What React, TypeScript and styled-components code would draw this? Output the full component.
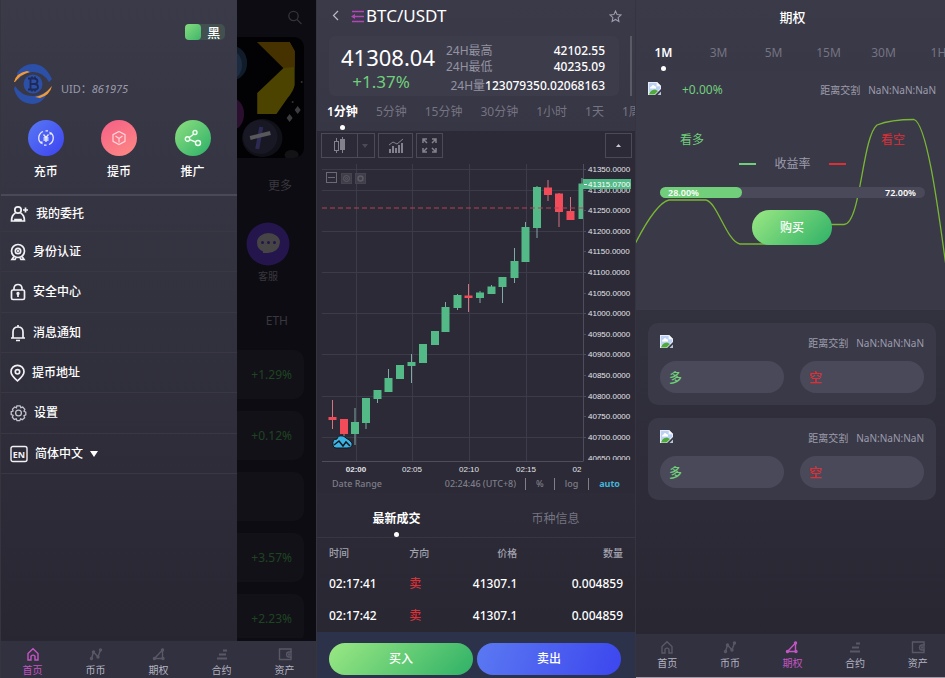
import React from "react";
import styled, { createGlobalStyle } from "styled-components";

const GlobalStyle = createGlobalStyle`
  * { box-sizing: border-box; }
  body {
    margin: 0;
    background: #33323e;
    color: #fff;
    font-family: "Noto Sans", "Noto Sans CJK SC", sans-serif;
    font-size: 12px;
    line-height: 16px;
  }
  button, input, select {
    font: inherit;
    color: inherit;
    margin: 0;
    padding: 0;
    border: 0;
    background: none;
  }
  ul { list-style: none; margin: 0; padding: 0; }
  a { color: inherit; text-decoration: none; }
  h1, h2, p { margin: 0; font: inherit; }
  svg { display: block; flex: none; }
`;

const GREEN = "#71cf7b";
const RED = "#dc3036";
const LIME = "linear-gradient(135deg, #9be883, #2fb167)";
const BLUE = "linear-gradient(110deg, #5b79f2, #3c46ee)";

const Screens = styled.main`
  display: grid;
  grid-template-columns: 316fr 319fr 310fr;
  min-height: 100vh;
`;

const Phone = styled.section`
  display: flex;
  flex-direction: column;
  min-width: 0;
  overflow: hidden;
  border-left: 1px solid #35343f;
  background: linear-gradient(#3b3a49, #2d2c38 70%, #262530);
`;

/* ---------- bottom navigation ---------- */

const NavBar = styled.nav<{ $tall?: boolean }>`
  display: grid;
  grid-template-columns: repeat(5, 1fr);
  margin-top: auto;
  margin-right: ${(p) => (p.$tall ? -4 : 0)}px;
  padding-top: 6px;
  height: ${(p) => (p.$tall ? 45 : 38)}px;
  background: #32313f;
  border-bottom: ${(p) => (p.$tall ? "2px solid #a598a4" : "0")};
`;

const NavLink = styled.a<{ $active: boolean }>`
  display: flex;
  flex-direction: column;
  align-items: center;
  gap: 2px;
  font-size: 10px;
  line-height: 14px;
  color: ${(p) => (p.$active ? "#c455c4" : "#b4b5c3")};
  svg { color: ${(p) => (p.$active ? "#c455c4" : "#595867")}; }
`;

const navIcons: Record<string, React.ReactNode> = {
  首页: <path d="M2 6.5 7 1.8 12 6.5V13H9V9.2Q7 7 5 9.2V13H2Z" />,
  币币: (
    <>
      <path d="M2.5 11.5 4.5 5 9 10 11.5 3" />
      <circle cx="2.5" cy="11.5" r="1" />
      <circle cx="4.5" cy="5" r="1" />
      <circle cx="9" cy="10" r="1" />
      <circle cx="11.5" cy="3" r="1" />
    </>
  ),
  期权: (
    <>
      <path d="M2.5 11.5 10.5 3V11.5Z" />
      <circle cx="2.5" cy="11.5" r="1" />
      <circle cx="10.5" cy="3" r="1" />
      <circle cx="11" cy="11.5" r="1" />
    </>
  ),
  合约: <path d="M8 3.5H12M4 7.5H11M2 11.5H12" strokeWidth="1.8" />,
  资产: (
    <>
      <path d="M13 5V2H1.5V12.5H13V10" />
      <path d="M13 5H10.5Q8.5 5.5 8.5 7.5T10.5 10H13Z" />
      <circle cx="11" cy="7.5" r=".5" />
    </>
  ),
};

function BottomNav({ active, tall }: { active: string; tall?: boolean }) {
  return (
    <NavBar $tall={tall} aria-label={`${active}导航`}>
      {Object.keys(navIcons).map((name) => (
        <NavLink key={name} href="#" $active={name === active}>
          <svg width="14" height="14" viewBox="0 0 14 14" fill="none" stroke="currentColor" strokeWidth="1.4">
            {navIcons[name]}
          </svg>
          {name}
        </NavLink>
      ))}
    </NavBar>
  );
}

/* ---------- first screen: drawer ---------- */

const DrawerArea = styled.div`
  display: grid;
  grid-template-columns: 3fr 1fr;
  flex: 1;
`;

const Drawer = styled.aside`
  display: flex;
  flex-direction: column;
`;

const ThemeToggle = styled.label`
  display: flex;
  align-items: center;
  align-self: flex-end;
  gap: 6px;
  margin: 24px 12px 0 0;
  width: 40px;
  height: 16px;
  border-radius: 5px;
  background: #425150;
  font-size: 13px;
  font-weight: 500;
  input {
    appearance: none;
    width: 16px;
    height: 16px;
    border-radius: 4px;
    background: linear-gradient(135deg, #86dc7e, #3fb56b);
  }
`;

const Profile = styled.div`
  display: flex;
  align-items: center;
  gap: 8px;
  margin: 24px 0 0 12px;
  color: #9a9bab;
  font-size: 11px;
  p { padding-top: 10px; }
`;

const Actions = styled.div`
  display: grid;
  grid-template-columns: repeat(3, 1fr);
  margin-top: 16px;
  padding: 0 8px 14px;
  border-bottom: 2px solid #4a4957;
`;

const Action = styled.button`
  display: flex;
  flex-direction: column;
  align-items: center;
  gap: 8px;
  font-weight: 500;
`;

const ActionDisc = styled.span<{ $fill: string }>`
  display: grid;
  place-items: center;
  width: 36px;
  height: 36px;
  border-radius: 50%;
  background: ${(p) => p.$fill};
`;

const MenuRow = styled.li<{ $first?: boolean }>`
  height: ${(p) => (p.$first ? 36 : 40)}px;
  border-bottom: 1px solid #383743;
  &:nth-child(3n) { height: 41px; }
  a, label {
    display: flex;
    align-items: center;
    gap: 7px;
    height: 100%;
    padding-left: 9px;
    font-weight: 500;
  }
`;

const LanguageSelect = styled.select`
  appearance: none;
  width: 48px;
  font-weight: 500;
`;

const Backdrop = styled.div`
  display: flex;
  flex-direction: column;
  align-items: flex-end;
  min-width: 0;
  padding-right: 12px;
  background: #0d0c12;
  color: #39383f;
  overflow: hidden;
`;

const SearchButton = styled.button`
  margin: 10px 2px 0 0;
  height: 15px;
`;

const Banner = styled.div`
  align-self: stretch;
  height: 121px;
  margin-top: 12px;
  border-radius: 0 10px 10px 0;
  background: #020204;
  overflow: hidden;
  svg { width: 100%; height: 100%; }
`;

const MoreLink = styled.a`
  margin: 20px 12px 0 0;
`;

const Support = styled.a`
  display: flex;
  flex-direction: column;
  align-items: center;
  gap: 2px;
  margin: 28px 14px 0 0;
  font-size: 10px;
`;

const CoinHead = styled.p`
  margin: 29px 16px 0 0;
`;

const CoinCard = styled.div`
  display: flex;
  align-items: center;
  justify-content: flex-end;
  align-self: stretch;
  flex: none;
  height: 49px;
  margin-top: 12px;
  padding-right: 12px;
  border-radius: 0 10px 10px 0;
  background: #121117;
  color: #1e4522;
`;

const CoinList = styled.div`
  display: flex;
  flex-direction: column;
  align-self: stretch;
  height: 300px;
  margin-top: 9px;
  overflow: hidden;
`;

type MenuItem = { label: string; width: number; icon: React.ReactNode };

const menu: MenuItem[] = [
  {
    label: "我的委托",
    width: 19,
    icon: (
      <>
        <circle cx="8" cy="5" r="3.2" />
        <path d="M5.5 8Q1.5 10 1.5 16H14.5Q14.5 10 10.5 8M5 16V14.5H11V16" />
        <path d="M15.5 2.5V7.5M13 5H18" />
      </>
    ),
  },
  {
    label: "身份认证",
    width: 16,
    icon: (
      <>
        <circle cx="8" cy="8" r="6.5" />
        <circle cx="8" cy="8" r="2.7" />
        <circle cx="8" cy="8" r=".4" />
        <path d="M4 13.5 2 16.5H5L6 15M12 13.5 14 16.5H11L10 15" />
      </>
    ),
  },
  {
    label: "安全中心",
    width: 16,
    icon: (
      <>
        <rect x="1.5" y="7" width="13" height="9.5" rx="1.5" />
        <path d="M4 7V5Q4.5 1.5 8 1.5T12 5V7M8 11V14" />
        <circle cx="8" cy="10.5" r=".8" />
      </>
    ),
  },
  {
    label: "消息通知",
    width: 16,
    icon: <path d="M1 14H15M3 14V8Q3 3 8 3T13 8V14M8 1V3M6 16.5H10" />,
  },
  {
    label: "提币地址",
    width: 15,
    icon: (
      <>
        <path d="M7.5 16.8Q1 11.5 1 7.8A6.5 6.5 0 0 1 14 7.8Q14 11.5 7.5 16.8Z" />
        <circle cx="7.5" cy="7.8" r="2.2" />
      </>
    ),
  },
  {
    label: "设置",
    width: 17,
    icon: (
      <g stroke="#c3c3cd" strokeWidth="1.3">
        <path d="M6.9 1.8h3.2l.7 1.9 1.9-.6 2.1 2.3-.8 1.8 1.8 1v2.7l-1.8.8.6 2-2.3 2-1.7-.8-.9 1.8H7l-.7-1.9-2 .6-2-2.2.8-1.8-1.9-.9V7.8l1.9-.8-.6-1.9 2.2-2.1 1.7.8z" />
        <circle cx="8.5" cy="9" r="2.9" />
      </g>
    ),
  },
];

function BrandMark() {
  return (
    <svg width="40" height="40" viewBox="0 0 40 40" fill="none">
      <path d="M4 9Q10 0 20 0 32 0 39 15L36 18Q30 8 20 8 11 8 5 16Z" fill="#2c4fa8" />
      <path d="M2 22Q8 32 20 32 29 32 36 25 31 40 19 40 5 39 1 25Z" fill="#2c4fa8" />
      <path d="M1 18Q3 9 14 7L17 8Q8 10 2 18ZM39 22Q37 31 27 34L22 33Q32 31 38 23Z" fill="#f39a34" />
      <circle cx="20" cy="20" r="9.5" fill="#2c4fa8" />
      <path
        d="M15 14.5H21.5Q24.5 15 24.5 17.3T21.5 20H17.5H22Q25 20.5 25 23T22 25.5H15M17.5 14.5V25.5M19 12.5V14.5M22 12.5V14.5M19 25.5V27.5M22 25.5V27.5"
        stroke="#1e2a55"
        strokeWidth="1.8"
      />
    </svg>
  );
}

function DrawerScreen() {
  return (
    <Phone>
      <DrawerArea>
        <Drawer>
          <ThemeToggle>
            <input type="checkbox" />黑
          </ThemeToggle>
          <Profile>
            <BrandMark />
            <p>
              UID：<em>861975</em>
            </p>
          </Profile>
          <Actions>
            <Action>
              <ActionDisc $fill="linear-gradient(135deg, #5878f4, #3d43f1)">
                <svg width="18" height="18" viewBox="0 0 18 18" fill="none" stroke="#e9ebff" strokeWidth="1.3">
                  <path d="M6 2.500A7 7 0 0 0 4.500 14.500M12 15.500A7 7 0 0 0 13.500 3.500M8.500 1.800H11M7 16.200H9.500" />
                  <path d="M2.300 12.500 5.500 15.500V12.500ZM15.700 5.500 12.500 2.500V5.500Z" fill="#e9ebff" stroke="none" />
                  <path d="M6.500 5.500 9 8.500 11.500 5.500M6.500 9H11.500M6.500 11H11.500M9 8.500V13" />
                </svg>
              </ActionDisc>
              充币
            </Action>
            <Action>
              <ActionDisc $fill="linear-gradient(150deg, #f55f86, #fd8a84)">
                <svg width="16" height="16" viewBox="0 0 16 16" fill="none" stroke="#ffd5db" strokeWidth="1.2">
                  <path d="M8 1.500 14 4.700V11.300L8 14.500 2 11.300V4.700ZM4.500 6 8 8.500 11.500 6M8 8.500V12.500" />
                </svg>
              </ActionDisc>
              提币
            </Action>
            <Action>
              <ActionDisc $fill="linear-gradient(135deg, #8fdf80, #2bb068)">
                <svg width="18" height="18" viewBox="0 0 18 18" fill="none" stroke="#f0fff2" strokeWidth="1.4">
                  <circle cx="11" cy="3.5" r="2" />
                  <circle cx="3.5" cy="10" r="2.2" />
                  <circle cx="14" cy="14" r="2.5" />
                  <path d="M9.700 5.200 5.200 8.500M5.700 10.600 11.600 13" />
                </svg>
              </ActionDisc>
              推广
            </Action>
          </Actions>
          <ul>
            {menu.map((item, i) => (
              <MenuRow key={item.label} $first={i === 0}>
                <a href="#">
                  <svg
                    width={item.width}
                    height="18"
                    viewBox={`0 0 ${item.width} 18`}
                    fill="none"
                    stroke="#f1f1f5"
                    strokeWidth="1.7"
                  >
                    {item.icon}
                  </svg>
                  {item.label}
                </a>
              </MenuRow>
            ))}
            <MenuRow>
              <label>
                <svg width="18" height="18" viewBox="0 0 18 18" fill="none" stroke="#f1f1f5" aria-label="Language">
                  <rect x="1" y="1.5" width="16" height="15" rx="2" strokeWidth="1.4" />
                  <text x="9" y="12.5" textAnchor="middle" fontSize="9" fontWeight="700" fill="#f1f1f5" stroke="none">
                    EN
                  </text>
                </svg>
                <LanguageSelect defaultValue="zh">
                  <option value="zh">简体中文</option>
                </LanguageSelect>
                <svg width="8" height="6" viewBox="0 0 8 6">
                  <path d="M0 0H8L4 6Z" fill="#fff" />
                </svg>
              </label>
            </MenuRow>
          </ul>
        </Drawer>
        <Backdrop>
          <SearchButton aria-label="搜索">
            <svg width="14" height="15" viewBox="0 0 14 15" fill="none" stroke="#34333b" strokeWidth="1.3">
              <circle cx="5.5" cy="6" r="4.7" />
              <path d="M9 9.500 13.500 14" />
            </svg>
          </SearchButton>
          <Banner>
            <svg viewBox="0 0 66 121" preserveAspectRatio="none">
              <ellipse cx="-4" cy="26" rx="14" ry="17" fill="#111c2b" />
              <ellipse cx="-4" cy="28" rx="9" ry="13" fill="#1c2b40" />
              <ellipse cx="-5" cy="77" rx="12" ry="16" fill="#2b0f2e" />
              <path d="M20 5H52L57 14V48Q56 54 50 61L39 77H20V56L46 31Z" fill="#4d4300" />
              <path d="M20 5H52L57 14V30L46 31Z" fill="#453200" />
              <ellipse cx="25" cy="101" rx="20" ry="19" fill="#101018" />
              <ellipse cx="23" cy="100" rx="17" ry="17" fill="#181824" />
              <path d="M24 90 20 112" stroke="#2c2a52" strokeWidth="4" />
              <path d="M13 101 33 96" stroke="#57575c" strokeWidth="4" />
              <path d="M60 69 63 73 60 77 57 73ZM52 77 55 81 52 85 49 81Z" fill="#3c3c40" />
              <circle cx="55" cy="65" r="1" fill="#333" />
              <circle cx="64" cy="45" r="1" fill="#333" />
              <ellipse cx="54" cy="118" rx="7" ry="5" fill="#131315" />
            </svg>
          </Banner>
          <MoreLink href="#">更多</MoreLink>
          <Support href="#">
            <svg width="44" height="44" viewBox="0 0 44 44">
              <circle cx="22" cy="22" r="21.5" fill="#24164d" />
              <path d="M11 20.500A11.500 9.500 0 0 1 34 20.500Q33 30 22 31H17V29.500Q11 27 11 20.500Z" fill="#464444" />
              <g fill="#24164d">
                <circle cx="16.5" cy="20.5" r="1.5" />
                <circle cx="22.5" cy="20.5" r="1.5" />
                <circle cx="28.5" cy="20.5" r="1.5" />
              </g>
            </svg>
            客服
          </Support>
          <CoinHead>ETH</CoinHead>
          <CoinList>
            <CoinCard>+1.29%</CoinCard>
            <CoinCard>+0.12%</CoinCard>
            <CoinCard />
            <CoinCard>+3.57%</CoinCard>
            <CoinCard>+2.23%</CoinCard>
          </CoinList>
        </Backdrop>
      </DrawerArea>
      <BottomNav active="首页" />
    </Phone>
  );
}

/* ---------- second screen: market ---------- */

const MarketHeader = styled.header`
  display: flex;
  align-items: center;
  height: 36px;
  padding: 0 13px 4px 14px;
  h1 { flex: 1; font-size: 17px; line-height: 24px; }
  button { margin-right: 10px; }
  button:last-child { margin-right: 0; }
`;

const SummaryCard = styled.div`
  display: grid;
  grid-template-columns: 102px 1fr;
  align-items: center;
  gap: 7px;
  margin: 0 11px 0 12px;
  padding: 4px 14px 0 8px;
  height: 60px;
  border-radius: 6px;
  background: #3d3c4b;
`;

const SummaryWrap = styled.div`
  display: grid;
  grid-template-columns: 1fr 2px;
  padding-right: 3px;
  &::after {
    content: "";
    background: #5a5966;
  }
`;

const Price = styled.div`
  text-align: center;
  font-size: 22px;
  line-height: 28px;
  p {
    padding-right: 14px;
    font-size: 17px;
    line-height: 22px;
    color: ${GREEN};
  }
`;

const Stats = styled.dl`
  margin: 0;
  div { display: flex; justify-content: space-between; white-space: nowrap; }
  div:last-child { justify-content: flex-end; padding-top: 3px; }
  dt { color: #9493a1; }
  dd { margin: 0; font-weight: 500; }
`;

const Intervals = styled.div`
  display: flex;
  gap: 18px;
  height: 35px;
  padding: 8px 0 0 10px;
  overflow: hidden;
  white-space: nowrap;
`;

const Tab = styled.button<{ $on?: boolean }>`
  display: flex;
  flex-direction: column;
  align-items: center;
  flex: none;
  height: 26px;
  color: ${(p) => (p.$on ? "#fff" : "#757482")};
  font-weight: ${(p) => (p.$on ? 600 : 400)};
  &::after {
    content: "";
    width: 5px;
    height: 5px;
    margin-top: 5px;
    border-radius: 50%;
    background: ${(p) => (p.$on ? "#fff" : "transparent")};
  }
`;

const ChartBox = styled.div`
  background: #2b2a36;
`;

const ChartTools = styled.div`
  display: flex;
  gap: 3px;
  height: 30px;
  padding: 2px 3px 2px 4px;
`;

const ToolButton = styled.button<{ $width: number; $push?: boolean }>`
  display: flex;
  align-items: center;
  justify-content: space-around;
  width: ${(p) => p.$width}px;
  height: 25px;
  margin-left: ${(p) => (p.$push ? "auto" : "0")};
  border: 1px solid #4b4a56;
  color: #83828c;
`;

const Chart = styled.svg`
  width: 100%;
  height: auto;
  font-family: "Liberation Sans", sans-serif;
  font-size: 8px;
`;

const ChartFooter = styled.div`
  display: flex;
  align-items: center;
  height: 18px;
  padding: 0 15px;
  font-size: 9px;
  font-weight: 500;
  color: #7f7e89;
  span { margin-right: auto; }
  button {
    padding: 0 10px;
    height: 12px;
    line-height: 12px;
    border-left: 1px solid #7f7e89;
  }
  time { margin-right: 9px; }
  button:last-child { padding-right: 0; font-weight: 700; color: #43b5dc; border-color: #7f7e89; }
`;

const TradeTabs = styled.div`
  display: grid;
  grid-template-columns: 1fr 1fr;
  padding-top: 18px;
  border-bottom: 1px solid #373642;
`;

const Trades = styled.table`
  width: 100%;
  border-collapse: collapse;
  table-layout: fixed;
  font-weight: 500;
  white-space: nowrap;
  th { height: 30px; padding: 0; font-size: 10px; font-weight: 500; color: #a3a3b0; text-align: left; }
  td { height: 32px; padding: 0; }
  th:first-child, td:first-child { padding-left: 12px; }
  th:nth-child(3), td:nth-child(3) { text-align: right; }
  th:last-child, td:last-child { text-align: right; padding-right: 12px; }
  td:nth-child(2) { color: ${RED}; }
`;

const TradeCol = styled.col<{ $width: string }>`
  width: ${(p) => p.$width};
`;

const TradeBar = styled.div`
  display: grid;
  grid-template-columns: 1fr 1fr;
  gap: 4px;
  margin-top: auto;
  padding: 11px 14px 4px 12px;
  background: #2d324b;
`;

const PillButton = styled.button<{ $fill: string; $wide?: boolean }>`
  height: ${(p) => (p.$wide ? 32 : 35)}px;
  width: ${(p) => (p.$wide ? "auto" : "80px")};
  border-radius: 18px;
  background: ${(p) => p.$fill};
  font-weight: 500;
`;

type Candle = [x: number, top: number, bottom: number, high: number, low: number, up: boolean];

const candles: Candle[] = [
  [16.5, 257, 260, 240, 269, false],
  [28, 259, 274, 259, 276, false],
  [39, 262, 274, 248, 285, true],
  [50, 238, 263, 238, 269, true],
  [61.5, 230, 239, 230, 243, true],
  [72.5, 218, 232, 209, 232, true],
  [84, 205, 219, 205, 219, true],
  [95.5, 202, 206, 194, 223, true],
  [107, 184, 203, 184, 203, true],
  [119, 171, 185, 171, 185, true],
  [129.5, 147, 172, 142, 172, true],
  [141.5, 135, 148, 134, 150, true],
  [152.5, 135.5, 138, 124, 152, false],
  [164, 132.5, 138, 131, 143, true],
  [175.5, 126.5, 134, 125, 134, true],
  [186.5, 117, 127, 117, 143, true],
  [198.5, 101, 118, 88, 123, true],
  [209.5, 67, 102, 62, 102, true],
  [221, 27, 68, 26, 78, true],
  [232, 27.5, 35, 20, 41, false],
  [243, 33.5, 52, 33, 67, false],
  [254.5, 51, 60, 37, 60, false],
];

const times: [string, number][] = [
  ["02:00", 40],
  ["02:05", 96],
  ["02:10", 153],
  ["02:15", 210],
];

function CandleChart() {
  return (
    <Chart viewBox="1 1 318 314" role="img" aria-label="BTC/USDT">
      <g stroke="#3c3b4a">
        {times.map(([t, x]) => (
          <path key={t} d={`M${x + 0.5} 4V301`} />
        ))}
        {[9.5, 30.5, 71.5, 112.5, 153.5, 194.5, 236.5, 277.5].map((y) => (
          <path key={y} d={`M6 ${y}H267`} />
        ))}
        <path d="M6 301.500H267.500M267.500 4V301" stroke="#4e4d5d" />
      </g>
      {candles.map(([x, top, bottom, high, low, up]) => (
        <g key={x}>
          <path d={`M${x} ${high}V${low}`} stroke={up ? "#80a9a4" : "#d2737f"} />
          <rect x={x - 4} y={top} width="8" height={bottom - top} fill={up ? "#53b987" : "#f24b59"} />
        </g>
      ))}
      <path d="M266 18V24" stroke="#80a9a4" />
      <rect x="262.5" y="23.5" width="4.5" height="35.5" fill="#53b987" />
      <path d="M6 48H267" stroke="#b8405a" strokeWidth="1.2" strokeDasharray="5 3" />
      <path
        d="M17 285Q16 279 21 279C22 275 27 275 30 278Q34 280 36 283 37 288 31 288H20Q17 288 17 285Z"
        fill="#3bb3e4"
        stroke="#15161d"
      />
      <path d="M18 285 23 281 27 286 30 282 34 286" fill="none" stroke="#15161d" strokeWidth="1.5" />
      <g fill="none" stroke="#6b6a75">
        <rect x="10.5" y="12.5" width="10" height="10" />
        <path d="M12 17.500H19" />
        <rect x="25.5" y="13.5" width="10" height="10" fill="#3f3e49" stroke="#45444f" />
        <circle cx="30.5" cy="18.5" r="3" stroke="#5b5a65" />
        <circle cx="30.5" cy="18.5" r="1" stroke="#5b5a65" />
        <rect x="39.5" y="13.5" width="10" height="10" fill="#3f3e49" stroke="#45444f" />
        <circle cx="44.5" cy="18.5" r="2.5" strokeWidth="1.5" stroke="#5b5a65" />
      </g>
      <g fill="#e4e4ea">
        {Array.from({ length: 14 }, (_, i) => (
          <g key={i}>
            <path d={`M268 ${9.5 + Math.round(i * 20.6)}H270`} stroke="#4e4d5d" />
            <text x="272" y={12 + Math.round(i * 20.6)}>{`${41350 - i * 50}.0000`}</text>
          </g>
        ))}
        <svg x="268" y="290" width="50" height="10">
          <text x="4" y="11">40650.0000</text>
        </svg>
      </g>
      <rect x="267" y="19" width="48" height="10" fill="#53b987" />
      <path d="M268 24.500H271" stroke="#fff" />
      <text x="272" y="27" fill="#fff">
        41315.0700
      </text>
      <g fill="#e4e4ea" textAnchor="middle">
        {times.map(([t, x], i) => (
          <text key={t} x={x} y="312" fontWeight={i ? 400 : 700}>
            {t}
          </text>
        ))}
        <text x="261" y="312">
          02
        </text>
      </g>
    </Chart>
  );
}

function MarketScreen() {
  return (
    <Phone>
      <MarketHeader>
        <button aria-label="返回">
          <svg width="10" height="12" viewBox="0 0 10 12" fill="none" stroke="#b9b9c8" strokeWidth="1.2">
            <path d="M7 1 2.500 5.500 7 10" />
          </svg>
        </button>
        <svg width="15" height="13" viewBox="0 0 15 13" fill="none" stroke="#b246b8" strokeWidth="1.3">
          <path d="M1 1.500H13M4 6.500H13M1 11.500H13" />
          <path d="M0 6.500 4 4V9Z" fill="#b246b8" stroke="none" />
        </svg>
        <h1>BTC/USDT</h1>
        <button aria-label="收藏">
          <svg width="13" height="13" viewBox="0 0 13 13" fill="none" stroke="#9c9dae" strokeWidth="1.1">
            <path d="M6.500 1 8.100 4.600 12 5 9.100 7.600 9.900 11.500 6.500 9.500 3.100 11.500 3.900 7.600 1 5 4.900 4.600Z" />
          </svg>
        </button>
      </MarketHeader>
      <SummaryWrap>
        <SummaryCard>
          <Price>
            41308.04
            <p>+1.37%</p>
          </Price>
          <Stats>
            <div>
              <dt>24H最高</dt>
              <dd>42102.55</dd>
            </div>
            <div>
              <dt>24H最低</dt>
              <dd>40235.09</dd>
            </div>
            <div>
              <dt>24H量</dt>
              <dd>123079350.02068163</dd>
            </div>
          </Stats>
        </SummaryCard>
      </SummaryWrap>
      <Intervals>
        {["1分钟", "5分钟", "15分钟", "30分钟", "1小时", "1天", "1周"].map((t, i) => (
          <Tab key={t} $on={i === 0}>
            {t}
          </Tab>
        ))}
      </Intervals>
      <ChartBox>
        <ChartTools>
          <ToolButton $width={54} aria-label="K线类型">
            <svg width="52" height="23" viewBox="0 0 52 23" fill="none" stroke="currentColor">
              <path d="M14.500 4V7M14.500 16V19M20.500 3V19" />
              <rect x="12.5" y="7.5" width="4" height="9" />
              <rect x="18.5" y="5.5" width="4" height="10" fill="currentColor" />
              <path d="M35.500 0V23" stroke="#4b4a56" />
              <path d="M40 10H46L43 14Z" fill="#4b4a56" stroke="none" />
            </svg>
          </ToolButton>
          <ToolButton $width={35} aria-label="指标">
            <svg width="16" height="15" viewBox="0 0 16 15" fill="none" stroke="currentColor">
              <path d="M1 7 5 4 9 6 15 1" />
              <path d="M2 15V11M5 15V8M8 15V10M11 15V7M14 15V5" strokeWidth="2" />
            </svg>
          </ToolButton>
          <ToolButton $width={27} aria-label="全屏">
            <svg width="15" height="15" viewBox="0 0 15 15" fill="none" stroke="currentColor" strokeWidth="1.5">
              <path d="M1 5V1H5M1 1 5 5M10 1H14V5M14 1 10 5M1 10V14H5M1 14 5 10M14 10V14H10M14 14 10 10" />
            </svg>
          </ToolButton>
          <ToolButton $width={27} $push aria-label="收起">
            <svg width="5" height="3" viewBox="0 0 5 3">
              <path d="M0 3 2.500 0 5 3Z" fill="#c9c9d0" />
            </svg>
          </ToolButton>
        </ChartTools>
        <CandleChart />
        <ChartFooter>
          <span>Date Range</span>
          <time>02:24:46 (UTC+8)</time>
          <button>%</button>
          <button>log</button>
          <button>auto</button>
        </ChartFooter>
      </ChartBox>
      <TradeTabs>
        <Tab $on>最新成交</Tab>
        <Tab>币种信息</Tab>
      </TradeTabs>
      <Trades>
        <colgroup>
          <TradeCol $width="29%" />
          <TradeCol $width="11%" />
          <TradeCol $width="23%" />
          <TradeCol $width="37%" />
        </colgroup>
        <thead>
          <tr>
            <th>时间</th>
            <th>方向</th>
            <th>价格</th>
            <th>数量</th>
          </tr>
        </thead>
        <tbody>
          {["02:17:41", "02:17:42"].map((t) => (
            <tr key={t}>
              <td>{t}</td>
              <td>卖</td>
              <td>41307.1</td>
              <td>0.004859</td>
            </tr>
          ))}
        </tbody>
      </Trades>
      <TradeBar>
        <PillButton $wide $fill={LIME}>
          买入
        </PillButton>
        <PillButton $wide $fill={BLUE}>
          卖出
        </PillButton>
      </TradeBar>
    </Phone>
  );
}

/* ---------- third screen: options ---------- */

const OptionsTitle = styled.h1`
  padding: 9px 0 0 4px;
  font-size: 13px;
  font-weight: 500;
  text-align: center;
`;

const Periods = styled.div`
  display: grid;
  grid-auto-flow: column;
  grid-auto-columns: 55px;
  height: 46px;
  padding-top: 20px;
  overflow: hidden;
`;

const OptionsPanel = styled.div`
  display: grid;
  background: #3a3948;
  > * { grid-area: 1 / 1; }
`;

const Curve = styled.svg`
  width: 100%;
  height: 239px;
`;

const PanelContent = styled.div`
  display: flex;
  flex-direction: column;
  z-index: 1;
`;

const QuoteRow = styled.div<{ $inset?: boolean }>`
  display: flex;
  align-items: flex-start;
  gap: 8px;
  padding: ${(p) => (p.$inset ? "0" : "11px 9px 0 12px")};
  font-size: 10px;
  color: #9d9dac;
  p { flex: 1; padding-left: 12px; font-size: 12px; color: ${GREEN}; }
`;

const SideLabels = styled.div`
  display: flex;
  justify-content: space-between;
  padding: 34px 40px 0 44px;
`;

const Side = styled.span<{ $down?: boolean }>`
  color: ${(p) => (p.$down ? RED : GREEN)};
`;

const YieldTitle = styled.div`
  display: flex;
  align-items: center;
  justify-content: center;
  gap: 18px;
  margin-top: 8px;
  padding-left: 4px;
  color: #9d9dac;
  &::before, &::after {
    content: "";
    width: 17px;
    height: 2px;
    background: ${GREEN};
  }
  &::after { background: ${RED}; }
`;

const Ratio = styled.div`
  display: flex;
  align-items: center;
  justify-content: space-between;
  margin: 15px 20px 0 24px;
  padding-right: 9px;
  height: 11px;
  border-radius: 6px;
  background: #4a495a;
  font-size: 9px;
  line-height: 11px;
  font-weight: 600;
`;

const RatioFill = styled.span`
  width: 32%;
  padding-left: 8px;
  border-radius: 6px;
  background: ${GREEN};
`;

const BuySlot = styled.div`
  display: flex;
  justify-content: center;
  padding: 12px 0 0 3px;
`;

const OptionCard = styled.article`
  margin: 13px 9px 0 12px;
  padding: 12px;
  height: 82px;
  border-radius: 10px;
  background: #3a3948;
`;

const Choices = styled.div`
  display: grid;
  grid-template-columns: 1fr 1fr;
  gap: 16px;
  margin-top: 10px;
`;

const Choice = styled.button<{ $down?: boolean }>`
  height: 32px;
  padding-left: 9px;
  border-radius: 16px;
  background: #4a495a;
  text-align: left;
  font-size: 13px;
  font-weight: 500;
  color: ${(p) => (p.$down ? RED : GREEN)};
`;

function MissingImage() {
  return (
    <svg width="14" height="14" viewBox="0 0 14 14">
      <path d="M0 0H9L13 4V7L7 13H0Z" fill="#e6edf8" />
      <path d="M1 1H8.500V4.500H12V7L9 9 1 10Z" fill="#bcd2f4" />
      <path d="M9 0 13 4H9Z" fill="#f7f9fc" />
      <path d="M2 6.500Q2 4.500 3.500 4.500 5 2 6.500 4 8.500 4 8 6.500Z" fill="#fff" />
      <path d="M1 12.500Q2 8 7 7.500L10 9 6.500 12.500Z" fill="#4faa3b" />
      <path d="M9.500 13 13 9.500V13Z" fill="#b9c6da" />
    </svg>
  );
}

function OptionsScreen() {
  return (
    <Phone>
      <OptionsTitle>期权</OptionsTitle>
      <Periods>
        {["1M", "3M", "5M", "15M", "30M", "1H"].map((t, i) => (
          <Tab key={t} $on={i === 0}>
            {t}
          </Tab>
        ))}
      </Periods>
      <OptionsPanel>
        <Curve viewBox="636 71 309 239" preserveAspectRatio="none" fill="none" stroke="#7ab733" strokeWidth="1.3">
          <path d="M635 244Q656 203 669 200H706C717 202 727 242 740 244H770M825 224.500H844C861 224 862 137 877 125Q891 119.500 914 119.500C928 124 940 224 946 266" />
        </Curve>
        <PanelContent>
          <QuoteRow>
            <MissingImage />
            <p>+0.00%</p>
            <span>距离交割</span>
            <span>NaN:NaN:NaN</span>
          </QuoteRow>
          <SideLabels>
            <Side>看多</Side>
            <Side $down>看空</Side>
          </SideLabels>
          <YieldTitle>收益率</YieldTitle>
          <Ratio>
            <RatioFill>28.00%</RatioFill>
            <span>72.00%</span>
          </Ratio>
          <BuySlot>
            <PillButton $fill={LIME}>购买</PillButton>
          </BuySlot>
        </PanelContent>
      </OptionsPanel>
      {[0, 1].map((n) => (
        <OptionCard key={n}>
          <QuoteRow $inset>
            <MissingImage />
            <p />
            <span>距离交割</span>
            <span>NaN:NaN:NaN</span>
          </QuoteRow>
          <Choices>
            <Choice>多</Choice>
            <Choice $down>空</Choice>
          </Choices>
        </OptionCard>
      ))}
      <BottomNav active="期权" tall />
    </Phone>
  );
}

export default function App() {
  return (
    <>
      <GlobalStyle />
      <Screens>
        <DrawerScreen />
        <MarketScreen />
        <OptionsScreen />
      </Screens>
    </>
  );
}
